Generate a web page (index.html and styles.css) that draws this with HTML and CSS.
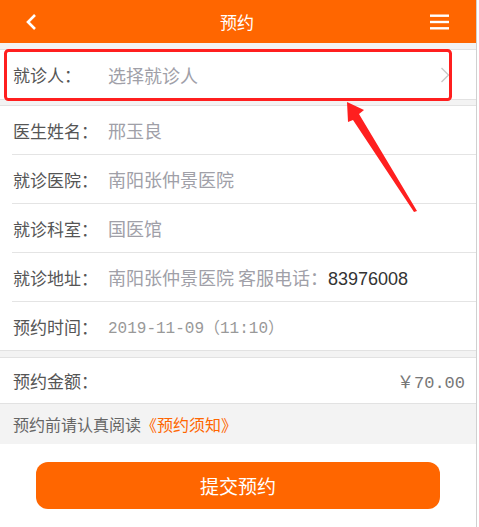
FILE: index.html
```html
<!DOCTYPE html>
<html lang="zh-CN">
<head>
  <meta charset="UTF-8">
  <title>预约</title>
  <link rel="stylesheet" href="styles.css">
</head>
<body>

  <div class="page">
    <div class="header">
      <svg class="back" width="14" height="18" viewBox="0 0 14 18">
        <path d="M11 2 L4 9 L11 16" fill="none" stroke="#fff" stroke-width="2.6" />
      </svg>
      <div class="title">预约</div>
      <svg class="menu" width="19" height="16" viewBox="0 0 19 16">
        <rect x="0" y="0.5" width="19" height="2.4" fill="#fff" />
        <rect x="0" y="6.8" width="19" height="2.4" fill="#fff" />
        <rect x="0" y="13.1" width="19" height="2.4" fill="#fff" />
      </svg>
    </div>

    <div class="section first">
      <div class="row pick">
        <span class="label">就诊人：</span>
        <span class="value pad">选择就诊人</span>
        <svg class="arrow" width="10" height="16" viewBox="0 0 10 16">
          <path d="M1.5 1 L8.5 8 L1.5 15" fill="none" stroke="#c8c8c8" stroke-width="1.4" />
        </svg>
      </div>
    </div>

    <div class="section">
      <div class="row line"><span class="label">医生姓名：</span><span class="value">邢玉良</span></div>
      <div class="row line"><span class="label">就诊医院：</span><span class="value">南阳张仲景医院</span></div>
      <div class="row line"><span class="label">就诊科室：</span><span class="value">国医馆</span></div>
      <div class="row line"><span class="label">就诊地址：</span><span class="value">南阳张仲景医院 客服电话：<b class="phone">83976008</b></span></div>
      <div class="row"><span class="label">预约时间：</span><span class="value date">2019-11-09（11:10）</span></div>
    </div>

    <div class="section money">
      <div class="row">
        <span class="label">预约金额：</span>
        <span class="price">￥70.00</span>
      </div>
    </div>

    <div class="notice">预约前请认真阅读<span class="link">《预约须知》</span></div>

    <div class="footer">
      <button class="submit">提交预约</button>
    </div>

    <svg class="mark" width="476" height="230" viewBox="0 0 476 230">
      <rect x="5.5" y="50.5" width="445" height="49" rx="3" fill="none" stroke="#ff1f1f" stroke-width="3" />
      <polygon points="347,102 364,110 359,114 417,211 414,212 353,120 348,122" fill="#ff1f1f" />
    </svg>
  </div>

</body>
</html>
```

FILE: styles.css
```css
body {
  margin: 0;
  background: #fff;
  font-family: "Noto Sans CJK SC", sans-serif;
}

.page {
  position: relative;
  width: 476px;
  height: 527px;
  background: #f3f3f3;
  border-right: 1px solid #d0d0d0;
  overflow: hidden;
}

.header {
  height: 43px;
  background: #ff6600;
  display: flex;
  align-items: center;
  justify-content: space-between;
  padding: 0 27px 0 24px;
  color: #fff;
}

.title {
  font-size: 17px;
  margin-left: 6px;
}

.section {
  background: #fff;
  border-top: 1px solid #e2e2e2;
  border-bottom: 1px solid #e2e2e2;
  margin-top: 5px;
}

.first {
  margin-top: 6px;
}

.row {
  display: flex;
  align-items: center;
  height: 48px;
  margin-left: 12px;
  font-size: 17px;
}

.line {
  border-bottom: 1px solid #e4e4e4;
}

.pick {
  height: 49px;
}

.money {
  margin-top: 6px;
}

.money .row {
  height: 45px;
}

.label {
  color: #555;
  width: 95px;
  padding-left: 1px;
}

.value {
  color: #a0a0a8;
  font-size: 18px;
}

.pad {
  flex: 1;
}

.arrow {
  margin-right: 26px;
}

.phone {
  font-family: "Liberation Sans", sans-serif;
  font-weight: normal;
  color: #333;
}

.date {
  font-family: "Liberation Mono", "Noto Sans CJK SC", monospace;
  font-size: 16px;
  color: #999;
}

.price {
  margin-left: auto;
  margin-right: 11px;
  font-family: "Liberation Mono", "Noto Sans CJK SC", monospace;
  font-size: 17px;
  color: #777;
}

.notice {
  height: 40px;
  display: flex;
  align-items: center;
  padding-left: 13px;
  font-size: 16px;
  color: #666;
}

.link {
  color: #ff6600;
}

.footer {
  background: #fff;
  padding: 18px 36px 0;
  height: 100px;
}

.submit {
  width: 100%;
  height: 47px;
  background: #ff6600;
  color: #fff;
  border: none;
  border-radius: 12px;
  font-family: "Noto Sans CJK SC", sans-serif;
  font-size: 19px;
}

.mark {
  position: absolute;
  left: 0;
  top: 0;
}
```
